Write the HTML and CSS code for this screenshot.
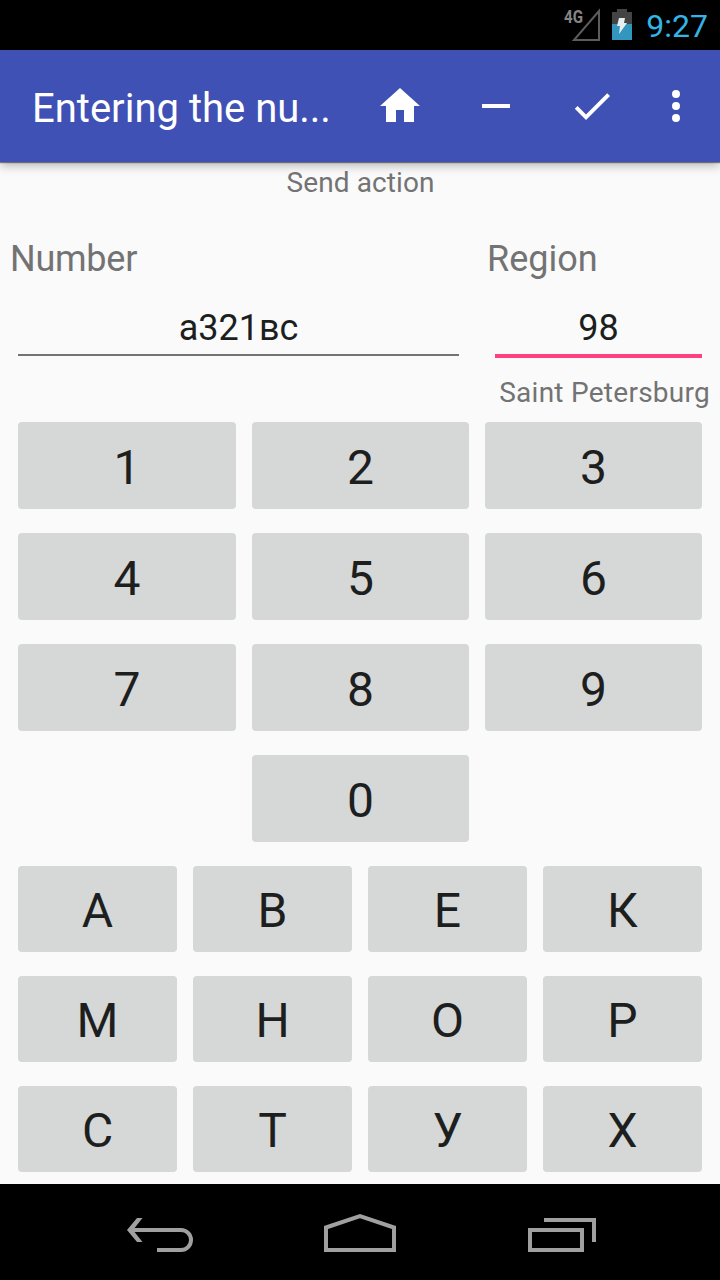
FILE: index.html
```html
<!DOCTYPE html>
<html lang="en">
<head>
    <meta charset="UTF-8">
    <meta name="viewport" content="width=device-width, initial-scale=1.0">
    <title>Entering the number</title>
    <link rel="stylesheet" href="styles.css">
</head>
<body>
    <div class="status-bar">
        <svg class="signal" width="38" height="50" viewBox="0 0 38 50">
            <text class="signal-label" x="0" y="23" textLength="19" lengthAdjust="spacingAndGlyphs">4G</text>
            <path d="M35 11V40H10Z" fill="none" stroke="#5c5c5c" stroke-width="2"/>
        </svg>
        <svg class="battery" width="20" height="32" viewBox="0 0 20 32">
            <path d="M5 0h10v3h5v12H0V3h5z" fill="#444"/>
            <path d="M0 15h20v16H0z" fill="#3296be"/>
            <path d="M7 9h6l-1 5h3L7 25l1-8H5z" fill="#e8eef0"/>
        </svg>
        <span class="clock">9:27</span>
    </div>

    <header class="toolbar">
        <h1 class="title">Entering the nu...</h1>
        <button class="action" aria-label="Home">
            <svg width="48" height="48" viewBox="0 0 24 24"><path d="M10 20v-6h4v6h5v-8h3L12 3 2 12h3v8z"/></svg>
        </button>
        <button class="action" aria-label="Remove">
            <svg width="48" height="48" viewBox="0 0 24 24"><path d="M5 11h14v2H5z"/></svg>
        </button>
        <button class="action" aria-label="Done">
            <svg width="48" height="48" viewBox="0 0 24 24"><path d="M9 16.2 4.800 12l-1.400 1.400L9 19 21 7l-1.400-1.400z"/></svg>
        </button>
        <button class="action more" aria-label="More options">
            <svg width="48" height="48" viewBox="0 0 24 24"><path d="M12 8a2 2 0 1 0 0-4 2 2 0 0 0 0 4zm0 2a2 2 0 1 0 0 4 2 2 0 0 0 0-4zm0 6a2 2 0 1 0 0 4 2 2 0 0 0 0-4z"/></svg>
        </button>
    </header>

    <main class="content">
        <p class="hint">Send action</p>
        <div class="fields">
            <div class="field number">
                <label class="label" for="number">Number</label>
                <input class="input" id="number" type="text" value="а321вс">
            </div>
            <div class="field region">
                <label class="label" for="region">Region</label>
                <input class="input active" id="region" type="text" value="98">
                <p class="region-name">Saint Petersburg</p>
            </div>
        </div>

        <div class="keys digits">
            <button class="key">1</button>
            <button class="key">2</button>
            <button class="key">3</button>
            <button class="key">4</button>
            <button class="key">5</button>
            <button class="key">6</button>
            <button class="key">7</button>
            <button class="key">8</button>
            <button class="key">9</button>
            <button class="key zero">0</button>
        </div>
        <div class="keys letters">
            <button class="key">А</button>
            <button class="key">В</button>
            <button class="key">Е</button>
            <button class="key">К</button>
            <button class="key">М</button>
            <button class="key">Н</button>
            <button class="key">О</button>
            <button class="key">Р</button>
            <button class="key">С</button>
            <button class="key">Т</button>
            <button class="key">У</button>
            <button class="key">Х</button>
        </div>
    </main>

    <nav class="nav-bar">
        <svg width="200" height="96" viewBox="0 0 200 96">
            <path d="M72 46H121a10 10 0 0 1 0 20H97" />
            <path class="arrow-head" d="M67 46L77 34H82.500L73 46L82.500 58H77Z" />
        </svg>
        <svg width="200" height="96" viewBox="0 0 200 96">
            <path d="M66 43.500L100 32.200L134 43.500V66H66Z" />
        </svg>
        <svg width="200" height="96" viewBox="0 0 200 96">
            <path d="M70 46H122V66H70Z" />
            <path d="M84 36H134V58" />
        </svg>
    </nav>
</body>
</html>
```
FILE: styles.css
```css
html, body {
    height: 100%;
    margin: 0;
    overflow: hidden;
}
body {
    display: flex;
    flex-direction: column;
    width: 720px;
    height: 1280px;
    background: #fafafa;
    color: #1d1f1e;
    font-family: Roboto, sans-serif;
}
button, input {
    font-family: inherit;
    color: inherit;
    border: none;
    border-radius: 0;
    padding: 0;
    margin: 0;
    outline: none;
    background: none;
    box-sizing: border-box;
}
h1, p {
    margin: 0;
    font-weight: 400;
}
svg {
    display: block;
}

/* Status bar */
.status-bar {
    display: flex;
    justify-content: flex-end;
    align-items: center;
    flex: none;
    height: 50px;
    padding-right: 12px;
    box-sizing: border-box;
    background: #000;
}
.signal {
    margin-right: 10px;
}
.signal-label {
    font-size: 19px;
    font-weight: 700;
    fill: #858585;
}
.battery {
    margin-right: 14px;
}
.clock {
    color: #33b5e5;
    font-size: 32px;
    font-weight: 400;
    line-height: 50px;
    padding-top: 2px;
}

/* Toolbar */
.toolbar {
    display: flex;
    align-items: center;
    flex: none;
    height: 112px;
    padding-left: 32px;
    box-sizing: border-box;
    position: relative;
    background: #3f51b5;
    box-shadow: 0 1px 1px rgba(0, 0, 0, 0.45), 0 3px 10px rgba(0, 0, 0, 0.3);
}
.title {
    flex: 1;
    color: #fff;
    font-size: 40px;
    line-height: 48px;
    padding-top: 5px;
    white-space: nowrap;
}
.action {
    display: flex;
    align-items: center;
    justify-content: center;
    width: 96px;
    height: 112px;
    fill: #fff;
}
.more {
    width: 80px;
    padding-right: 8px;
}

/* Form */
.content {
    flex: 1;
}
.hint {
    height: 72px;
    padding: 4px 0 0 1px;
    box-sizing: border-box;
    color: #737373;
    font-size: 28px;
    line-height: 33px;
    letter-spacing: 0.1px;
    text-align: center;
}
.fields {
    display: flex;
    height: 188px;
}
.field {
    display: flex;
    flex-direction: column;
    align-items: flex-start;
}
.number {
    width: 477px;
}
.region {
    width: 243px;
}
.label {
    margin-left: 10px;
    color: #737373;
    font-size: 36px;
    line-height: 50px;
}
.number .label {
    letter-spacing: -0.25px;
}
.input {
    width: 441px;
    height: 72px;
    margin-left: 18px;
    padding-top: 17px;
    border-bottom: 2px solid #737373;
    font-size: 36px;
    text-align: center;
}
.input.active {
    width: 207px;
    height: 74px;
    border-bottom: 4px solid #ff4081;
}
.region-name {
    align-self: flex-end;
    margin-top: 18px;
    padding-right: 10px;
    color: #737373;
    font-size: 28px;
    line-height: 33px;
    letter-spacing: 0.26px;
    white-space: nowrap;
}

/* Keyboard */
.keys {
    display: grid;
    gap: 24px 16px;
    padding: 0 18px;
}
.digits {
    grid-template-columns: 218px 217px 217px;
    grid-auto-rows: 87px;
    margin-bottom: 24px;
}
.letters {
    grid-template-columns: repeat(4, 159px);
    grid-auto-rows: 86px;
}
.key {
    padding-top: 3px;
    border-radius: 4px;
    background: #d6d7d7;
    font-size: 48px;
    line-height: 56px;
}
.digits .key {
    padding-top: 5px;
}
.zero {
    grid-column: 2;
}

/* Navigation bar */
.nav-bar {
    display: flex;
    justify-content: center;
    flex: none;
    height: 96px;
    background: #000;
    fill: none;
    stroke: #a0a0a0;
    stroke-width: 4;
}
.arrow-head {
    fill: #a0a0a0;
    stroke: none;
}
```
